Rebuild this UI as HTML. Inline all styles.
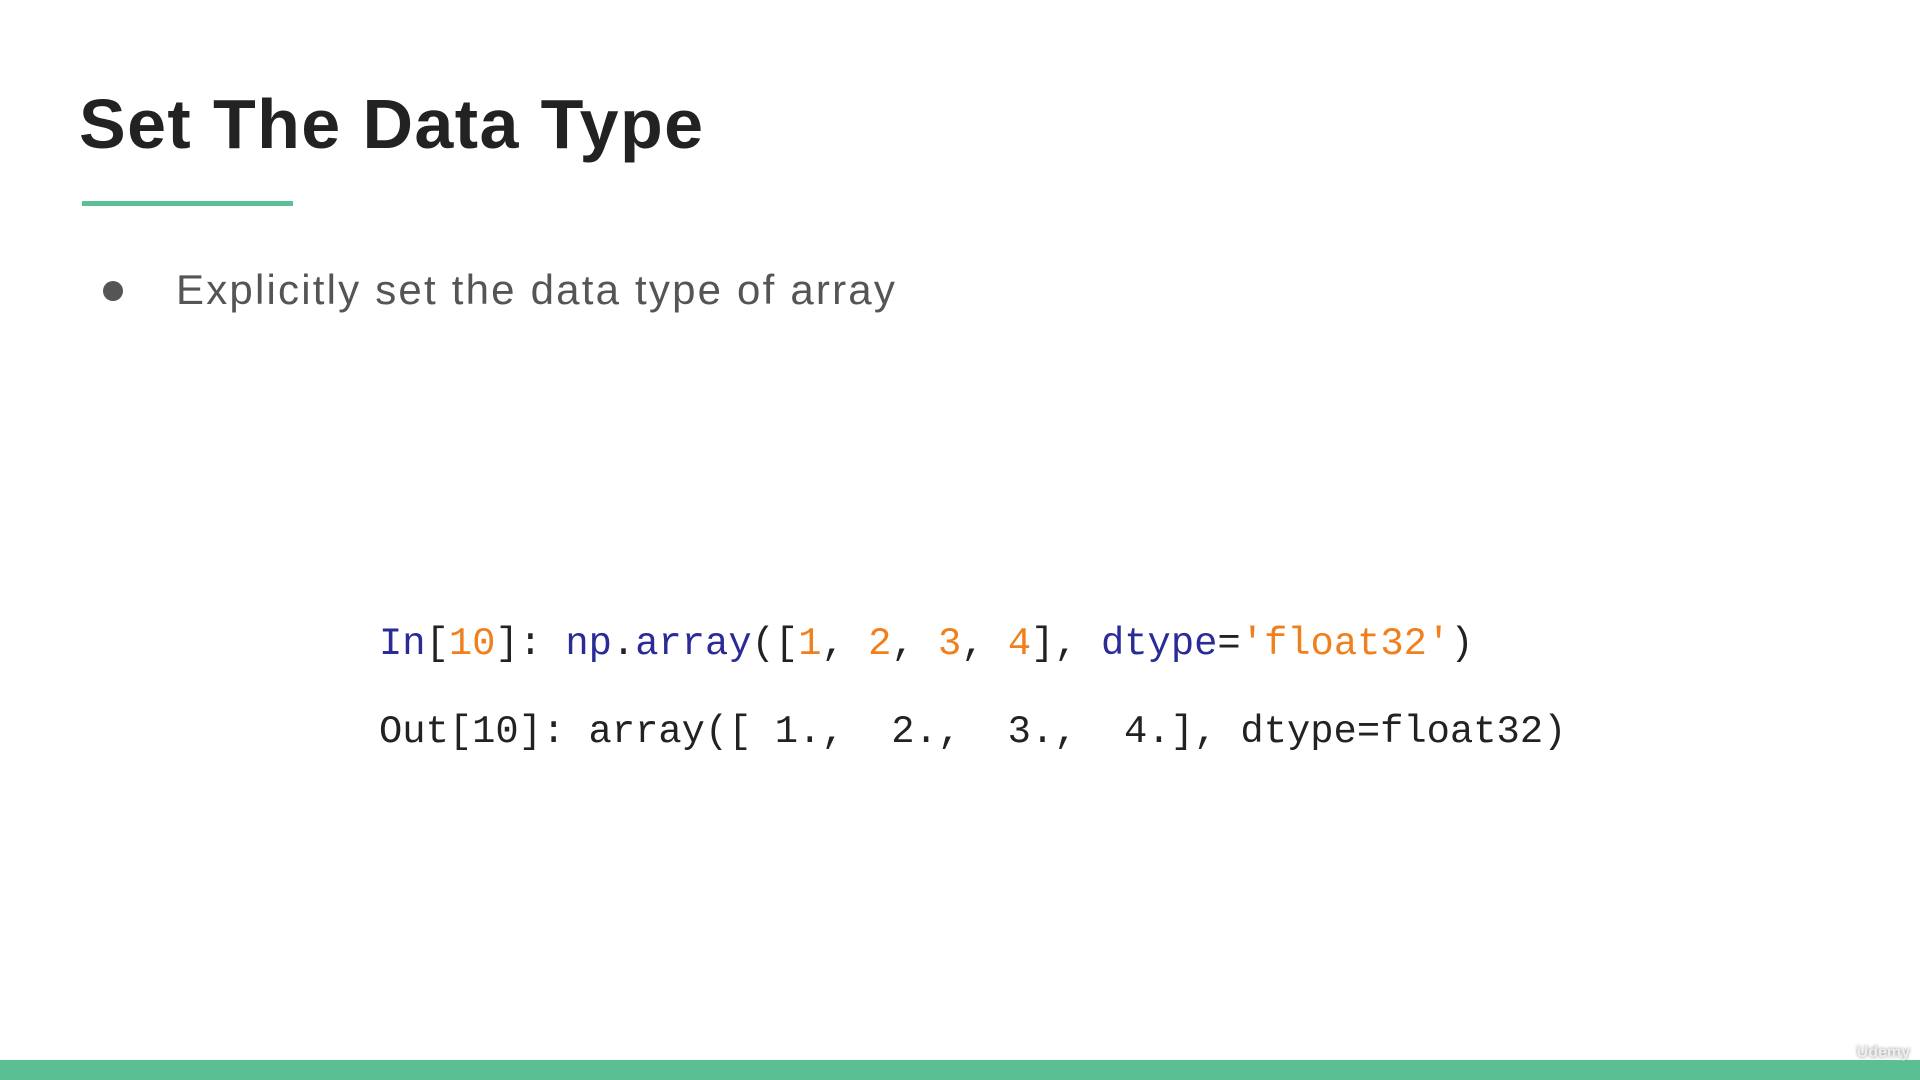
<!DOCTYPE html>
<html><head><meta charset="utf-8"><style>
html,body{margin:0;padding:0;width:1920px;height:1080px;background:#fff;overflow:hidden;position:relative}
.t{position:absolute;font-family:"Liberation Sans",sans-serif;white-space:pre}
#title{left:79px;top:84px;font-size:70px;font-weight:bold;color:#222;letter-spacing:1.4px}
#rule{position:absolute;left:82px;top:201px;width:211px;height:5px;background:#5bbf94}
#dot{position:absolute;left:103px;top:281px;width:20px;height:20px;border-radius:50%;background:#555}
#b{left:176px;top:266px;font-size:42px;color:#555;letter-spacing:2.2px}
.c{position:absolute;font-family:"Liberation Mono","DejaVu Sans Mono",monospace;font-size:38.8px;white-space:pre;color:#222;left:379px}
.k{color:#2b2b98}.n{color:#f0801e}
#bar{position:absolute;left:0;top:1060px;width:1920px;height:20px;background:#5bbf94}
#u{position:absolute;right:10px;top:1044px;font-family:"Liberation Sans",sans-serif;font-size:16px;font-weight:bold;color:#eee;text-shadow:0 0 3px #888}
</style></head><body>
<div class="t" id="title">Set The Data Type</div>
<div id="rule"></div>
<div id="dot"></div>
<div class="t" id="b">Explicitly set the data type of array</div>
<div class="c" style="top:622px"><span class="k">In</span>[<span class="n">10</span>]: <span class="k">np</span>.<span class="k">array</span>([<span class="n">1</span>, <span class="n">2</span>, <span class="n">3</span>, <span class="n">4</span>], <span class="k">dtype</span>=<span class="n">'float32'</span>)</div>
<div class="c" style="top:710px">Out[10]: array([ 1.,  2.,  3.,  4.], dtype=float32)</div>
<div id="bar"></div>
<div id="u">Udemy</div>
</body></html>
